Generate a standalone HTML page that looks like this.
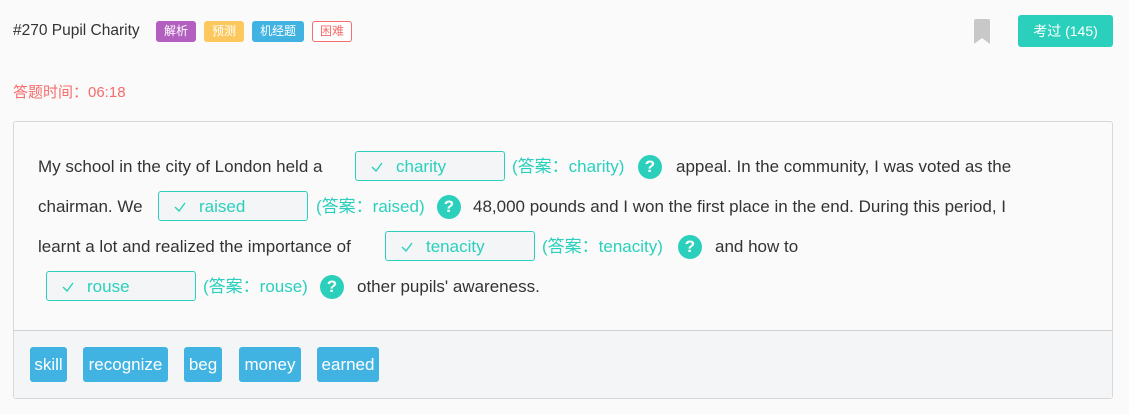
<!DOCTYPE html><html><head><meta charset="utf-8"><style>
body{margin:0;width:1129px;height:414px;background:#fafafa;font-family:"Liberation Sans","Noto Sans CJK SC",sans-serif;position:relative;overflow:hidden;color:#333}
.a{position:absolute;white-space:nowrap}
.tag{position:absolute;top:21px;height:21px;line-height:21px;font-size:12px;color:#fff;border-radius:3px;text-align:center}
.t{font-size:17px;line-height:20px}
.box{position:absolute;width:148px;height:28px;border:1px solid #2bd0bd;border-radius:3px;background:#f4f5f7;color:#2bd0bd;font-size:17px;line-height:30px}
.box svg{position:absolute;left:15px;top:10px}
.box span{position:absolute;left:40px;top:0}
.ans{color:#2bd0bd}
.q{position:absolute;width:24px;height:24px;border-radius:50%;background:#2bd0bd;color:#fff;font-weight:bold;font-size:17px;line-height:24px;text-align:center}
.w{position:absolute;top:347px;height:35px;line-height:35px;background:#41b3e3;color:#fff;font-size:17px;border-radius:3px;text-align:center}
</style></head><body>
<div class="a" style="left:13px;top:22px;font-size:15.5px;color:#333">#270 Pupil Charity</div>
<div class="tag" style="left:156px;width:40px;background:#b35fc0">解析</div>
<div class="tag" style="left:204px;width:40px;background:#fcc85e">预测</div>
<div class="tag" style="left:252px;width:52px;background:#41b3e3">机经题</div>
<div class="tag" style="left:312px;width:38px;height:19px;line-height:19px;border:1px solid #f76c6c;color:#f76c6c;background:#fff">困难</div>
<svg class="a" style="left:974px;top:19px" width="16" height="25"><path d="M0 2Q0 0 2 0H14Q16 0 16 2V25L8 19L0 25Z" fill="#c8c8c8"/></svg>
<div class="a" style="left:1018px;top:15px;width:95px;height:32px;line-height:32px;background:#2bd0bd;color:#fff;border-radius:3px;text-align:center;font-size:14px">考过 (145)</div>
<div class="a" style="left:13px;top:81px;font-size:15px;color:#f76c6c">答题时间：06:18</div>
<div class="a" style="left:13px;top:121px;width:1098px;height:276px;border:1px solid #d8d8d8;border-radius:3px;background:#fafafa"></div>
<div class="a" style="left:14px;top:330px;width:1098px;height:67px;border-top:1px solid #d0d0d0;background:#f4f5f7"></div>

<div class="a t" style="left:38px;top:157px">My school in the city of London held a</div>
<div class="box" style="left:355px;top:151px"><svg width="12" height="10"><path d="M1 5L5 9L11 1" fill="none" stroke="#2bd0bd" stroke-width="1.4"/></svg><span>charity</span></div>
<div class="a t ans" style="left:512px;top:157px">(答案：charity)</div>
<div class="q" style="left:638px;top:155px">?</div>
<div class="a t" style="left:676px;top:157px">appeal. In the community, I was voted as the</div>

<div class="a t" style="left:38px;top:197px">chairman. We</div>
<div class="box" style="left:158px;top:191px"><svg width="12" height="10"><path d="M1 5L5 9L11 1" fill="none" stroke="#2bd0bd" stroke-width="1.4"/></svg><span>raised</span></div>
<div class="a t ans" style="left:316px;top:197px">(答案：raised)</div>
<div class="q" style="left:437px;top:195px">?</div>
<div class="a t" style="left:473px;top:197px">48,000 pounds and I won the first place in the end. During this period, I</div>

<div class="a t" style="left:38px;top:237px">learnt a lot and realized the importance of</div>
<div class="box" style="left:385px;top:231px"><svg width="12" height="10"><path d="M1 5L5 9L11 1" fill="none" stroke="#2bd0bd" stroke-width="1.4"/></svg><span>tenacity</span></div>
<div class="a t ans" style="left:542px;top:237px">(答案：tenacity)</div>
<div class="q" style="left:678px;top:235px">?</div>
<div class="a t" style="left:715px;top:237px">and how to</div>

<div class="box" style="left:46px;top:271px"><svg width="12" height="10"><path d="M1 5L5 9L11 1" fill="none" stroke="#2bd0bd" stroke-width="1.4"/></svg><span>rouse</span></div>
<div class="a t ans" style="left:203px;top:277px">(答案：rouse)</div>
<div class="q" style="left:320px;top:275px">?</div>
<div class="a t" style="left:357px;top:277px">other pupils' awareness.</div>

<div class="w" style="left:30px;width:37px">skill</div>
<div class="w" style="left:83px;width:85px">recognize</div>
<div class="w" style="left:184px;width:38px">beg</div>
<div class="w" style="left:239px;width:62px">money</div>
<div class="w" style="left:317px;width:62px">earned</div>
</body></html>
